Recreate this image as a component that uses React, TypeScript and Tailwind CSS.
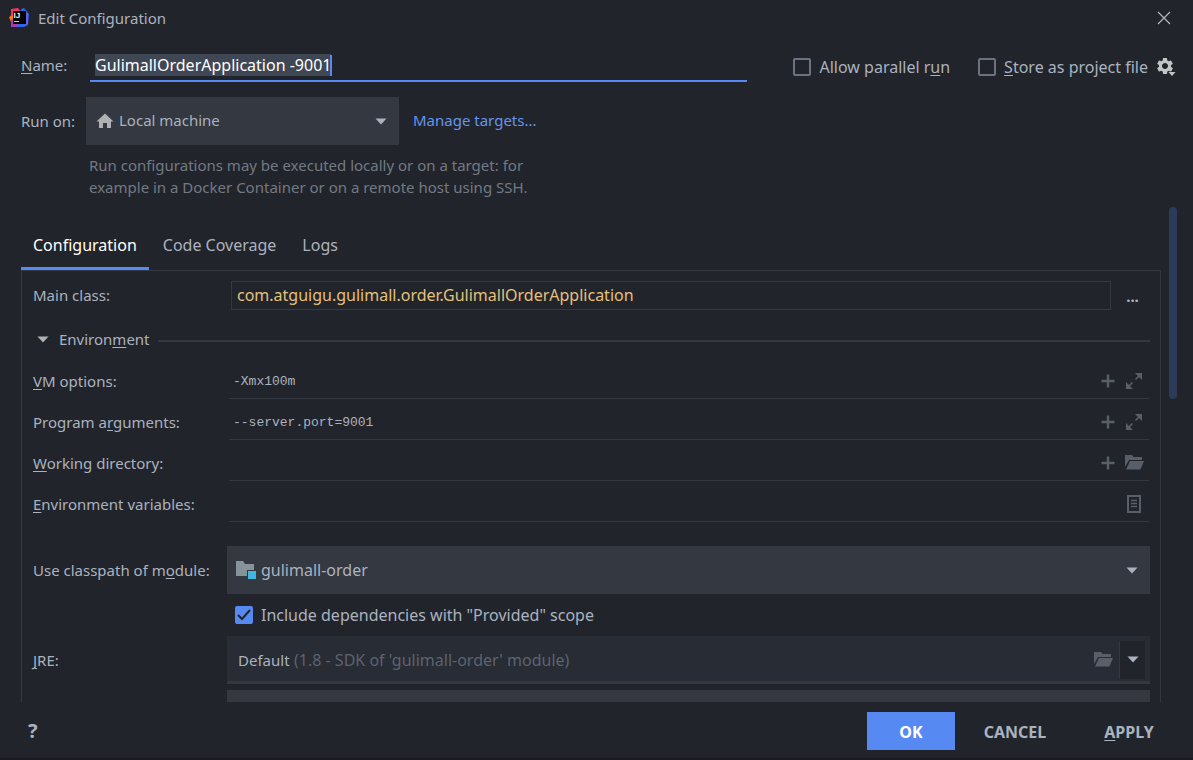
import { useEffect, useRef, useState } from 'react'
import type { ReactNode } from 'react'
import { MdSettings } from 'react-icons/md'

const Mnemonic = ({ children }: { children: ReactNode }) => (
  <u className="underline decoration-1 underline-offset-2">{children}</u>
)

function AppLogo() {
  return (
    <svg width="20" height="20" viewBox="0 0 20 20" aria-hidden="true">
      <path d="M2 1 9 0l3 4-3 8-8-2 1-4z" fill="#fe315d" />
      <path d="M0 9l4-2 3 6-5 1z" fill="#f97a12" />
      <path d="M2 12l8-2 4 9-12 0z" fill="#a53bb5" />
      <path d="M10 4l5-4 5 6-1 11-4 2-7 0z" fill="#2f66ea" />
      <path d="M11 3l3-3 3 4-4 3z" fill="#2f66ea" />
      <path d="M16 4l3 2v10l-3 1z" fill="#6a5be8" />
      <rect x="4" y="3" width="13" height="13" fill="#000" />
      <text x="4.5" y="10" fontFamily="Liberation Sans, sans-serif" fontSize="8" fontWeight="700" fill="#fff">IJ</text>
      <rect x="5" y="13" width="5" height="1" fill="#ccc" />
    </svg>
  )
}

function CloseIcon() {
  return (
    <svg width="14" height="14" viewBox="0 0 14 14" stroke="#b4b7bc" strokeWidth="1.2" aria-hidden="true">
      <path d="M1 1l12 12M13 1L1 13" />
    </svg>
  )
}

function HomeIcon() {
  return (
    <svg width="18" height="16" viewBox="0 0 18 16" fill="#afb1b3" aria-hidden="true">
      <path d="M9 0.5L17.5 8.5H15V15H11V10H7V15H3V8.5H0.5z" />
    </svg>
  )
}

function GearIcon() {
  return (
    <svg width="19" height="19" viewBox="0 0 19 19" fill="#c2c4c6" aria-hidden="true">
      <MdSettings x={-2} y={-2} size={20} color="#c2c4c6" />
      <path d="M11.5 14h7L15 18z" />
    </svg>
  )
}

function Arrow({ color = '#abb2bf' }: { color?: string }) {
  return (
    <svg width="12" height="7" viewBox="0 0 12 7" fill={color} aria-hidden="true">
      <path d="M0.5 0.5h11L6 6.5z" />
    </svg>
  )
}

function PlusIcon() {
  return (
    <svg width="14" height="14" viewBox="0 0 14 14" fill="#595f68" aria-hidden="true">
      <path d="M5.8 0.5h2.4v5.3h5.3v2.4H8.2v5.3H5.8V8.2H0.5V5.8h5.3z" />
    </svg>
  )
}

function ExpandIcon() {
  return (
    <svg width="16" height="16" viewBox="0 0 16 16" fill="#595f68" aria-hidden="true">
      <path d="M9 0h7v7zM0 9v7h7z" />
      <path d="M14 2L9.500 6.500M2 14l4.500-4.500" stroke="#595f68" strokeWidth="1.6" />
    </svg>
  )
}

function FolderIcon() {
  return (
    <svg width="19" height="15" viewBox="0 0 19 15" fill="#595f68" aria-hidden="true">
      <path d="M0 0h7l1.500 2H17v3H4L0 12z" />
      <path d="M5 6h14l-3.500 8.500H1z" />
    </svg>
  )
}

function ListIcon() {
  return (
    <svg width="14" height="18" viewBox="0 0 14 18" aria-hidden="true">
      <rect x="1" y="1" width="12" height="16" fill="none" stroke="#595f68" strokeWidth="2" />
      <path d="M4 5.500h6M4 8.500h6M4 11.500h6" stroke="#595f68" strokeWidth="1.4" />
    </svg>
  )
}

function ModuleIcon() {
  return (
    <svg width="20" height="18" viewBox="0 0 20 18" aria-hidden="true">
      <path d="M0 0h7l2 3h9v6h-7v6H0z" fill="#87939a" />
      <path d="M12 10h8v8h-8z" fill="#40b6e0" />
    </svg>
  )
}

interface CheckProps {
  id: string
  defaultChecked?: boolean
  children: ReactNode
}

function Check({ id, defaultChecked, children }: CheckProps) {
  return (
    <div className="flex items-center gap-2 text-base">
      <span className="grid size-[18px]">
        <input
          id={id}
          type="checkbox"
          defaultChecked={defaultChecked}
          className="peer col-start-1 row-start-1 size-[18px] appearance-none rounded-xs border-2 border-[#6b7280] checked:border-[#568af2] checked:bg-[#568af2]"
        />
        <svg viewBox="0 0 18 18" className="pointer-events-none invisible col-start-1 row-start-1 size-[18px] peer-checked:visible" aria-hidden="true">
          <path d="M3 9l4 4 8-9" fill="none" stroke="#21252b" strokeWidth="2" />
        </svg>
      </span>
      <label htmlFor={id} className="whitespace-nowrap">{children}</label>
    </div>
  )
}

interface FieldRowProps {
  id: string
  label: ReactNode
  value?: string
  children: ReactNode
}

function FieldRow({ id, label, value = '', children }: FieldRowProps) {
  return (
    <div className="mt-[5px] flex h-9 items-center">
      <label htmlFor={id} className="w-[196px] shrink-0">{label}</label>
      <div className="mr-px flex h-full flex-1 items-center border-b border-[#333841] pr-[5px]">
        <input
          id={id}
          defaultValue={value}
          className="min-w-0 flex-1 bg-transparent pt-[3px] pl-1 font-['Liberation_Mono',monospace] text-[13px] outline-none"
        />
        <div className="flex items-center gap-[6px]">{children}</div>
      </div>
    </div>
  )
}

const IconButton = ({ label, children }: { label: string; children: ReactNode }) => (
  <button type="button" aria-label={label} className="flex w-5 items-center justify-center">{children}</button>
)

const tabs = ['Configuration', 'Code Coverage', 'Logs']

export default function App() {
  const [activeTab, setActiveTab] = useState('Configuration')
  const nameRef = useRef<HTMLInputElement>(null)

  useEffect(() => {
    nameRef.current?.focus()
    nameRef.current?.select()
  }, [])

  return (
    <div className="flex h-screen flex-col overflow-hidden border-b-2 border-[#1b1a20] bg-[#21252b] font-['Noto_Sans',sans-serif] text-[15px] leading-[22px] text-[#abb2bf]">
      {/* Title bar */}
      <header className="flex h-[37px] shrink-0 items-center pr-[19px] pb-[2px] pl-[9px]">
        <AppLogo />
        <h1 className="ml-[9px] flex-1">Edit Configuration</h1>
        <IconButton label="Close"><CloseIcon /></IconButton>
      </header>

      {/* Name */}
      <div className="mt-[13px] flex h-8 shrink-0 items-center pr-[17px] pl-[21px]">
        <label htmlFor="name" className="w-[69px] shrink-0 pb-[2px]"><Mnemonic>N</Mnemonic>ame:</label>
        <div className="relative mr-[46px] h-8 min-w-0 flex-1">
          <input
            id="name"
            ref={nameRef}
            defaultValue="GulimallOrderApplication -9001"
            className="h-8 w-full border-b-2 border-[#568af2] bg-transparent pl-[5px] text-base text-white outline-none selection:bg-[#404754fe] selection:text-white"
          />
          <span className="absolute top-[5px] left-[240px] h-[21px] w-[2px] bg-[#568af2]" />
        </div>
        <div className="flex items-center gap-7 pt-[2px]">
          <Check id="parallel">Allow parallel r<Mnemonic>u</Mnemonic>n</Check>
          <Check id="store"><Mnemonic>S</Mnemonic>tore as project file</Check>
        </div>
        <div className="ml-2 pt-[2px]">
          <IconButton label="Storage options"><GearIcon /></IconButton>
        </div>
      </div>

      {/* Target */}
      <div className="mt-[15px] flex h-12 shrink-0 items-center pl-[21px]">
        <label htmlFor="target" className="w-[65px] shrink-0">Run on:</label>
        <div className="flex h-12 w-[313px] items-center bg-[#333841] pr-3 pl-[10px]">
          <HomeIcon />
          <select id="target" className="ml-[5px] flex-1 appearance-none bg-transparent pb-[2px] outline-none">
            <option>Local machine</option>
          </select>
          <Arrow />
        </div>
        <a href="#targets" className="ml-[14px] pb-[2px] text-[#6494ed]">Manage targets...</a>
      </div>
      <p className="mt-[9px] ml-[89px] shrink-0 text-[#737983]">
        Run configurations may be executed locally or on a target: for
        <br />
        example in a Docker Container or on a remote host using SSH.
      </p>

      {/* Scrolled part */}
      <div className="mt-[9px] flex min-h-0 flex-1 gap-2 overflow-hidden pr-4 pl-[21px]">
        <main className="min-w-0 flex-1">
          <div role="tablist" className="flex gap-[2px] pt-4 text-base">
            {tabs.map(tab => (
              <button
                key={tab}
                type="button"
                role="tab"
                aria-selected={tab === activeTab}
                onClick={() => setActiveTab(tab)}
                className={`h-[47px] border-b-3 px-3 ${tab === activeTab ? 'border-[#568af2] text-white' : 'border-transparent'}`}
              >
                {tab}
              </button>
            ))}
          </div>

          <div className="border border-[#333841] pt-[10px] pr-[10px] pl-[11px]">
            <div className="flex items-center">
              <label htmlFor="mainClass" className="w-[198px] shrink-0 pb-[2px]">Main class:</label>
              <input
                id="mainClass"
                defaultValue="com.atguigu.gulimall.order.GulimallOrderApplication"
                className="h-[29px] min-w-0 flex-1 border border-[#333841] bg-transparent pb-[2px] pl-[5px] text-base text-[#e5c07b] outline-none"
              />
              <button type="button" aria-label="Browse main class" className="w-[39px] pl-1 font-bold">...</button>
            </div>

            <div className="mt-[18px] flex h-[22px] items-center">
              <button type="button" className="flex items-center gap-[10px] pl-1">
                <Arrow color="#afb1b3" />
                <span>Environ<Mnemonic>m</Mnemonic>ent</span>
              </button>
              <div className="mt-1 ml-2 h-[2px] flex-1 bg-[#333841]" />
            </div>

            <div className="pt-2">
              <FieldRow id="vm" label={<><Mnemonic>V</Mnemonic>M options:</>} value="-Xmx100m">
                <IconButton label="Insert macro"><PlusIcon /></IconButton>
                <IconButton label="Expand"><ExpandIcon /></IconButton>
              </FieldRow>
              <FieldRow id="args" label={<>Program a<Mnemonic>r</Mnemonic>guments:</>} value="--server.port=9001">
                <IconButton label="Insert macro"><PlusIcon /></IconButton>
                <IconButton label="Expand"><ExpandIcon /></IconButton>
              </FieldRow>
              <FieldRow id="workdir" label={<><Mnemonic>W</Mnemonic>orking directory:</>}>
                <IconButton label="Insert macro"><PlusIcon /></IconButton>
                <IconButton label="Browse"><FolderIcon /></IconButton>
              </FieldRow>
              <FieldRow id="env" label={<><Mnemonic>E</Mnemonic>nvironment variables:</>}>
                <IconButton label="Edit variables"><ListIcon /></IconButton>
              </FieldRow>
            </div>

            <div className="mt-6 flex items-center">
              <label htmlFor="module" className="w-[194px] shrink-0">Use classpath of m<Mnemonic>o</Mnemonic>dule:</label>
              <div className="flex h-12 flex-1 items-center bg-[#333841] pr-3 pl-[9px]">
                <ModuleIcon />
                <select id="module" className="ml-[5px] flex-1 appearance-none bg-transparent text-base outline-none">
                  <option>gulimall-order</option>
                </select>
                <Arrow />
              </div>
            </div>

            <div className="flex h-[42px] items-center pl-[202px]">
              <Check id="provided" defaultChecked>Include dependencies with "Provided" scope</Check>
            </div>

            <div className="flex items-center">
              <label htmlFor="jre" className="w-[194px] shrink-0"><Mnemonic>J</Mnemonic>RE:</label>
              <div className="flex h-12 flex-1 items-center border-b-3 border-[#333841] bg-[#282c34] pt-[2px] pr-[5px] pl-[11px]">
                <select id="jre" className="appearance-none bg-transparent outline-none">
                  <option>Default</option>
                </select>
                <span className="ml-1 flex-1 text-base text-[#5c6370]">(1.8 - SDK of 'gulimall-order' module)</span>
                <IconButton label="Browse JRE"><FolderIcon /></IconButton>
                <button type="button" aria-label="Show JRE list" className="ml-[6px] flex h-[38px] w-[26px] items-center justify-center border-l border-[#333841] bg-[#21252b]">
                  <Arrow />
                </button>
              </div>
            </div>
            <div className="mt-[6px] ml-[194px] h-12 bg-[#333841]" />
          </div>
        </main>
        <div className="h-48 w-2 shrink-0 rounded-full bg-[#2d3b58]" />
      </div>

      {/* Buttons */}
      <footer className="flex h-14 shrink-0 items-center gap-4 pt-[2px] pr-5 pl-7 text-base font-bold">
        <button type="button" aria-label="Help" className="text-xl">?</button>
        <button type="button" className="ml-auto h-[38px] w-[88px] bg-[#568af2] pt-[2px] text-white">OK</button>
        <button type="button" className="h-[38px] w-[88px] pt-[2px]">CANCEL</button>
        <button type="button" className="ml-[10px] h-[38px] w-[88px] pt-[2px]"><Mnemonic>A</Mnemonic>PPLY</button>
      </footer>
    </div>
  )
}
